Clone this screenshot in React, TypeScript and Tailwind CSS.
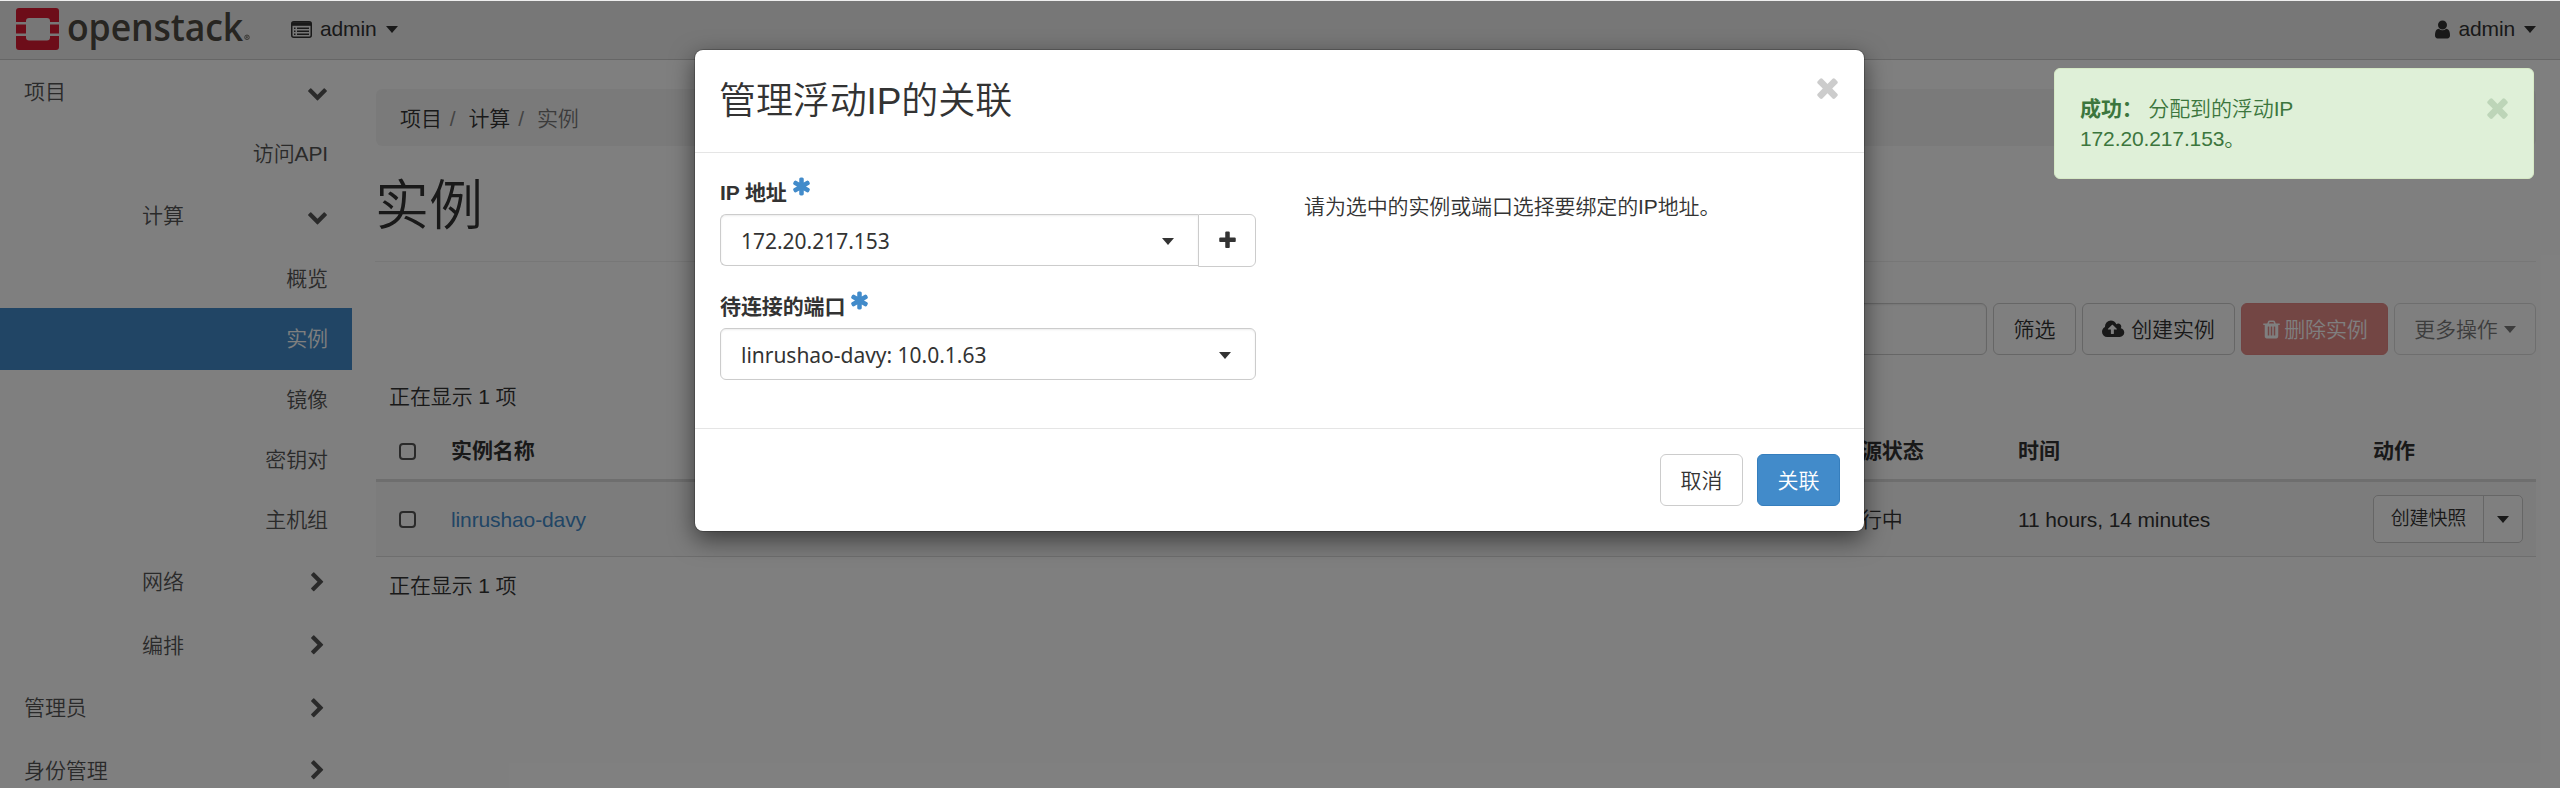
import type { ReactNode } from "react";

const ICONS = {
  user: "M1536 1399q0 109-62.5 187t-150.5 78h-854q-88 0-150.5-78t-62.5-187q0-85 8.5-160.5t31.5-152 58.5-131 94-89 134.5-34.5q131 128 313 128t313-128q76 0 134.5 34.5t94 89 58.5 131 31.5 152 8.5 160.5zm-256-887q0 159-112.5 271.5t-271.5 112.5-271.5-112.5-112.5-271.5 112.5-271.5 271.5-112.5 271.5 112.5 112.5 271.5z",
  times: "M1490 1322q0 40-28 68l-136 136q-28 28-68 28t-68-28l-294-294-294 294q-28 28-68 28t-68-28l-136-136q-28-28-28-68t28-68l294-294-294-294q-28-28-28-68t28-68l136-136q28-28 68-28t68 28l294 294 294-294q28-28 68-28t68 28l136 136q28 28 28 68t-28 68l-294 294 294 294q28 28 28 68z",
  plus: "M1600 736v192q0 40-28 68t-68 28h-416v416q0 40-28 68t-68 28h-192q-40 0-68-28t-28-68v-416h-416q-40 0-68-28t-28-68v-192q0-40 28-68t68-28h416v-416q0-40 28-68t68-28h192q40 0 68 28t28 68v416h416q40 0 68 28t28 68z",
  asterisk: "M1546 1050q46 26 59.5 77.5t-12.5 97.5l-64 110q-26 46-77.5 59.5t-97.5-12.5l-266-153v307q0 52-38 90t-90 38h-128q-52 0-90-38t-38-90v-307l-266 153q-46 26-97.5 12.5t-77.5-59.5l-64-110q-26-46-12.5-97.5t59.5-77.5l266-154-266-154q-46-26-59.5-77.5t12.5-97.5l64-110q26-46 77.5-59.5t97.5 12.5l266 153v-307q0-52 38-90t90-38h128q52 0 90 38t38 90v307l266-153q46-26 97.5-12.5t77.5 59.5l64 110q26 46 12.5 97.5t-59.5 77.5l-266 154z",
  down: "M1683 808l-742 741q-19 19-45 19t-45-19l-742-741q-19-19-19-45.5t19-45.5l166-165q19-19 45-19t45 19l531 531 531-531q19-19 45-19t45 19l166 165q19 19 19 45.5t-19 45.5z",
  right: "M1363 877l-742 742q-19 19-45 19t-45-19l-166-166q-19-19-19-45t19-45l531-531-531-531q-19-19-19-45t19-45l166-166q19-19 45-19t45 19l742 742q19 19 19 45t-19 45z",
  trash: "M704 1376v-704q0-14-9-23t-23-9h-64q-14 0-23 9t-9 23v704q0 14 9 23t23 9h64q14 0 23-9t9-23zm256 0v-704q0-14-9-23t-23-9h-64q-14 0-23 9t-9 23v704q0 14 9 23t23 9h64q14 0 23-9t9-23zm256 0v-704q0-14-9-23t-23-9h-64q-14 0-23 9t-9 23v704q0 14 9 23t23 9h64q14 0 23-9t9-23zm-544-992h448l-48-117q-7-9-17-11h-317q-10 2-17 11zm928 32v64q0 14-9 23t-23 9h-96v948q0 83-47 143.5t-113 60.5h-832q-66 0-113-58.5t-47-141.5v-952h-96q-14 0-23-9t-9-23v-64q0-14 9-23t23-9h309l70-167q15-37 54-63t79-26h320q40 0 79 26t54 63l70 167h309q14 0 23 9t9 23z",
};

function Icon({ name, className = "size-[21px]" }: { name: keyof typeof ICONS; className?: string }) {
  return (
    <svg viewBox="0 0 1792 1792" fill="currentColor" className={`block shrink-0 ${className}`}>
      <path d={ICONS[name]} />
    </svg>
  );
}

function CloudUpload() {
  return (
    <svg viewBox="-64 0 1984 1792" fill="currentColor" className="block h-[21px] w-[23px] shrink-0">
      <path d="M1216 864q0-14-9-23l-352-352q-9-9-23-9t-23 9l-351 351q-10 12-10 24 0 14 9 23t23 9h224v352q0 13 9.5 22.5t22.5 9.5h192q13 0 22.5-9.5t9.5-22.5v-352h224q13 0 22.5-9.5t9.5-22.5zm640 288q0 159-112.5 271.5t-271.5 112.5h-1088q-185 0-316.5-131.5t-131.5-316.5q0-130 70-240t188-165q-2-30-2-43 0-212 150-362t362-150q156 0 285.5 87t188.5 231q71-62 166-62 106 0 181 75t75 181q0 76-41 138 130 31 213.5 135.5t83.5 238.5z" />
    </svg>
  );
}

function ListAlt() {
  return (
    <svg viewBox="0 0 21 17" className="block h-[17px] w-[21px] shrink-0">
      <rect x="0.75" y="0.75" width="19.5" height="15.5" rx="2" fill="none" stroke="currentColor" strokeWidth="1.5" />
      <path d="M1 1.2h19v3.6H1z" fill="currentColor" />
      <path d="M3 7.2h1.5M6 7.2h12M3 10.2h1.5M6 10.2h12M3 13.2h1.5M6 13.2h12" stroke="currentColor" strokeWidth="1.4" />
    </svg>
  );
}

function Caret() {
  return <span className="block h-0 w-0 shrink-0 border-x-[6px] border-t-[7px] border-x-transparent border-t-current" />;
}

function Logo() {
  return (
    <svg viewBox="0 0 240 46" className="block h-[46px] w-[240px] overflow-visible">
      <g fill="#da1a32">
        <path d="M3 0h37a3 3 0 0 1 3 3v11h-9v-1q0-3-3-3H13q-3 0-3 3v1H0V3a3 3 0 0 1 3-3z" />
        <path d="M0 16.5h10v9H0zM34 16.5h9v9h-9z" />
        <path d="M0 28h10v1.500q0 3 3 3h18q3 0 3-3V28h9v11a3 3 0 0 1-3 3H3a3 3 0 0 1-3-3z" />
      </g>
      <text x="51" y="32.500" fontSize="38" fontWeight="600" fill="#4e4a42" textLength="176" lengthAdjust="spacingAndGlyphs" fontFamily='"Open Sans", sans-serif'>
        openstack
      </text>
      <circle cx="231" cy="29.300" r="2.300" fill="none" stroke="#4e4a42" strokeWidth="0.7" />
      <path d="M230.300 30.600v-2.600h1q.8 0 .8.8t-.8.7h-1m.8 0l.9 1.100" fill="none" stroke="#4e4a42" strokeWidth="0.5" />
    </svg>
  );
}

function NavRow({ label, h, pl, icon, active }: { label: string; h: string; pl?: string; icon?: "down" | "right"; active?: boolean }) {
  return (
    <li className={`flex shrink-0 items-center pr-6 ${h} ${pl ? `justify-between ${pl}` : "justify-end"} ${active ? "bg-[#428bca] text-white" : "text-[#555]"}`}>
      <span>{label}</span>
      {icon && <Icon name={icon} />}
    </li>
  );
}

function Checkbox() {
  return <span className="block size-[17px] rounded-[4px] border-2 border-[#555] bg-white" />;
}

function Button({ children, className }: { children: ReactNode; className: string }) {
  return <button className={`flex h-[52px] shrink-0 items-center justify-center rounded-md border pt-px ${className}`}>{children}</button>;
}

const GRID = "grid grid-cols-[75px_1389px_178px_355px_163px] items-center";

export default function App() {
  return (
    <div className="relative flex h-[788px] w-[2560px] flex-col overflow-hidden bg-white font-['Liberation_Sans','Noto_Sans_CJK_SC',sans-serif] text-[21px] leading-[30px] font-[350] tracking-[-0.12px] text-[#333]">
      <header className="flex h-[60px] shrink-0 items-start justify-between border-b border-[#ccc] bg-[#eee] pt-2 pr-6 pl-4">
        <div className="flex">
          <Logo />
          <div className="ml-[35px] flex h-[42px] items-center">
            <ListAlt />
            <span className="ml-2">admin</span>
            <span className="ml-[9px]"><Caret /></span>
          </div>
        </div>
        <div className="flex h-[42px] items-center">
          <Icon name="user" />
          <span className="ml-[5px]">admin</span>
          <span className="ml-[9px]"><Caret /></span>
        </div>
      </header>

      <div className="flex min-h-0 flex-1">
        <ul className="flex w-[352px] shrink-0 flex-col pt-px">
          <NavRow label="项目" h="h-[62px]" pl="pl-6" icon="down" />
          <NavRow label="访问API" h="h-[62px]" />
          <NavRow label="计算" h="h-[62px]" pl="pl-[142px]" icon="down" />
          <NavRow label="概览" h="h-[61px] pt-0.5" />
          <NavRow label="实例" h="h-[62px]" active />
          <NavRow label="镜像" h="h-[60px]" />
          <NavRow label="密钥对" h="h-[60px]" />
          <NavRow label="主机组" h="h-[60px]" />
          <NavRow label="网络" h="h-[64px]" pl="pl-[142px]" icon="right" />
          <NavRow label="编排" h="h-[62px] pt-px" pl="pl-[142px]" icon="right" />
          <NavRow label="管理员" h="h-[63px] pt-px" pl="pl-6" icon="right" />
          <NavRow label="身份管理" h="h-[62px] pt-px" pl="pl-6" icon="right" />
        </ul>

        <main className="flex flex-1 flex-col pt-[29px] pr-6 pl-6">
          <nav className="flex h-[57px] shrink-0 items-center rounded-md bg-[#f5f5f5] pt-0.5 pl-6">
            <span>项目</span>
            <span className="mr-[13px] ml-2 text-[#888]">/</span>
            <span>计算</span>
            <span className="mr-[13px] ml-2 text-[#888]">/</span>
            <span className="text-[#777]">实例</span>
          </nav>
          <h1 className="mt-[30px] -ml-px h-[86px] shrink-0 border-b border-[#eee] text-[54px] leading-[60px]">实例</h1>

          <div className="mt-[41px] flex shrink-0 justify-end gap-1.5">
            <div className="h-[52px] w-[320px] rounded-md border border-[#ccc] bg-white shadow-[inset_0_1px_2px_rgba(0,0,0,0.075)]" />
            <Button className="w-[83px] border-[#ccc]">筛选</Button>
            <Button className="w-[153px] gap-1.5 border-[#ccc]"><CloudUpload /><span>创建实例</span></Button>
            <Button className="w-[147px] gap-0.5 border-[#e48784] bg-[#e78c89] text-white"><Icon name="trash" /><span>删除实例</span></Button>
            <Button className="w-[142px] gap-1.5 border-[#ddd] text-[#7b7b7b]"><span>更多操作</span><Caret /></Button>
          </div>

          <p className="mt-[27px] h-[30px] shrink-0 pl-[13px]">正在显示 1 项</p>

          <div className={`mt-[8px] h-[59px] shrink-0 pt-[3px] font-bold ${GRID}`}>
            <span className="pl-[23px]"><Checkbox /></span>
            <span>实例名称</span>
            <span>电源状态</span>
            <span>时间</span>
            <span>动作</span>
          </div>
          <div className={`h-[78px] shrink-0 border-t-[3px] border-b border-t-[#ddd] border-b-[#ddd] bg-[#f9f9f9] ${GRID}`}>
            <span className="pl-[23px]"><Checkbox /></span>
            <span className="pt-0.5 text-[#428bca]">linrushao-davy</span>
            <span className="pt-0.5">运行中</span>
            <span className="pt-0.5">11 hours, 14 minutes</span>
            <div className="flex h-12 w-[150px] rounded-[5px] border border-[#ccc] bg-white text-[19px]">
              <span className="flex flex-1 items-center justify-center border-r border-[#ccc]">创建快照</span>
              <span className="flex w-[38px] items-center justify-center"><Caret /></span>
            </div>
          </div>
          <p className="mt-[14px] pl-[13px]">正在显示 1 项</p>
        </main>
      </div>

      <div className="absolute inset-x-0 top-px bottom-0 bg-black/50" />

      <section className="absolute top-[49px] left-[694px] flex h-[483px] w-[1171px] flex-col rounded-[9px] border border-black/20 bg-white bg-clip-padding shadow-[0_8px_23px_rgba(0,0,0,0.5)]">
        <div className="flex h-[103px] shrink-0 justify-between border-b border-[#e5e5e5] pt-[28px] pr-[21px] pl-[24px]">
          <h2 className="h-[48px] text-[37px] leading-[48px] tracking-[-0.1px]">管理浮动IP的关联</h2>
          <Icon name="times" className="-mt-[6px] size-[31px] text-[#ccc]" />
        </div>
        <div className="flex flex-1 pl-[25px]">
          <div className="flex w-[536px] flex-col">
            <div className="mt-[23px] flex h-[38px] items-start gap-[4px]">
              <span className="pt-[2px] font-bold">IP 地址</span>
              <Icon name="asterisk" className="size-[21px] text-[#428bca]" />
            </div>
            <div className="flex h-[53px] items-start">
              <div className="flex h-[52px] flex-1 items-center justify-between rounded-l-md border border-r-0 border-[#ccc] pt-0.5 pr-6 pl-5 shadow-[inset_0_1px_2px_rgba(0,0,0,0.075)]">
                <span className="font-['Noto_Sans',sans-serif] font-normal tracking-[-0.02px]">172.20.217.153</span>
                <Caret />
              </div>
              <div className="flex h-[53px] w-[58px] items-center justify-center rounded-r-md border border-[#ccc]"><Icon name="plus" /></div>
            </div>
            <div className="mt-[23px] flex h-[38px] items-start gap-[4px]">
              <span className="pt-[2px] font-bold">待连接的端口</span>
              <Icon name="asterisk" className="size-[21px] text-[#428bca]" />
            </div>
            <div className="flex h-[52px] items-center justify-between rounded-md border border-[#ccc] pt-0.5 pr-6 pl-5 shadow-[inset_0_1px_2px_rgba(0,0,0,0.075)]">
              <span className="font-['Noto_Sans',sans-serif] font-normal tracking-[-0.02px]">linrushao-davy: 10.0.1.63</span>
              <Caret />
            </div>
          </div>
          <p className="mt-[39px] ml-12">请为选中的实例或端口选择要绑定的IP地址。</p>
        </div>
        <div className="flex h-[103px] shrink-0 items-start justify-end gap-[14px] border-t border-[#e5e5e5] pt-[25px] pr-6">
          <Button className="w-[83px] border-[#ccc]">取消</Button>
          <Button className="w-[83px] border-[#357ebd] bg-[#428bca] text-white">关联</Button>
        </div>
      </section>

      <aside className="absolute top-[68px] left-[2054px] flex h-[111px] w-[480px] justify-between rounded-md border border-[#d6e9c6] bg-[#dff0d8] pt-[25px] pr-5 pl-[25px] text-[#3c763d]">
        <p className="w-[240px]"><b className="font-bold">成功：</b> 分配到的浮动IP 172.20.217.153。</p>
        <Icon name="times" className="-mt-[2px] size-[31px] text-[#bdd5b8]" />
      </aside>
    </div>
  );
}
